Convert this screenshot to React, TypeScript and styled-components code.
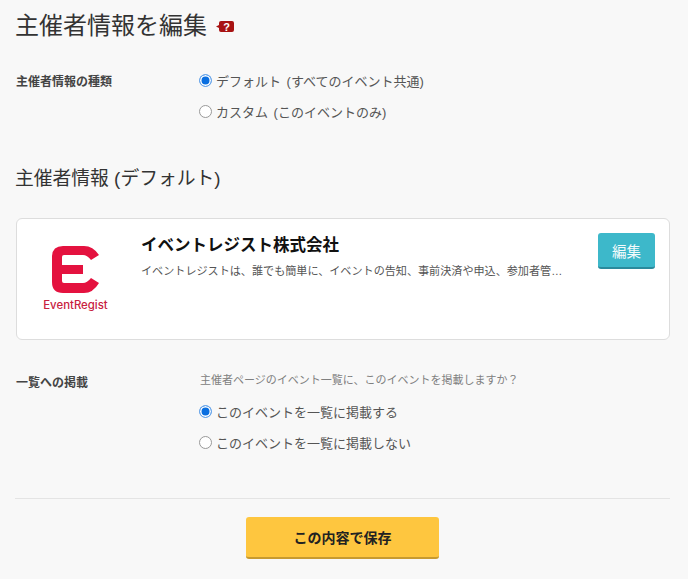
import React from 'react';
import styled, { createGlobalStyle } from 'styled-components';

const GlobalStyle = createGlobalStyle`
  html, body {
    margin: 0;
    padding: 0;
    background: #f8f8f8;
    font-family: "Liberation Sans", "Noto Sans CJK JP", sans-serif;
    color: #333;
  }
`;

const Page = styled.div`
  width: 688px;
  height: 579px;
  overflow: hidden;
  box-sizing: border-box;
  padding: 11px 18px 0 16px;
`;

const TitleRow = styled.div`
  display: flex;
  align-items: center;
  gap: 9px;
  height: 30px;
`;

const Title = styled.h1`
  margin: 0;
  font-size: 24px;
  font-weight: 400;
  line-height: 30px;
  color: #333;
  margin-left: -1px;
`;

const Section = styled.div<{ $top: number }>`
  display: flex;
  margin-top: ${(p) => p.$top}px;
`;

const Label = styled.div`
  width: 184px;
  flex: none;
  padding-top: 2px;
  font-size: 12px;
  font-weight: 700;
  line-height: 18px;
  color: #444;
`;

const Options = styled.div`
  display: flex;
  flex-direction: column;
  gap: 13px;
`;

const Hint = styled.div`
  font-size: 11px;
  line-height: 16px;
  color: #808080;
  margin-bottom: 14px;
`;

const Option = styled.label`
  display: flex;
  align-items: center;
  gap: 4px;
  height: 18px;
  font-size: 13px;
  word-spacing: 2px;
  color: #555;
`;

const Radio = styled.span<{ $on?: boolean }>`
  width: 13px;
  height: 13px;
  margin-left: -1px;
  box-sizing: border-box;
  border-radius: 50%;
  background: ${(p) => (p.$on ? '#0a6fe0' : '#fff')};
  border: 1px solid ${(p) => (p.$on ? '#6aa6ea' : '#999')};
  box-shadow: ${(p) => (p.$on ? 'inset 0 0 0 1.5px #fff' : 'none')};
`;

const SubTitle = styled.h2`
  margin: 46px 0 0 -1px;
  font-size: 18.8px;
  font-weight: 400;
  line-height: 26px;
  color: #333;
`;

const Card = styled.div`
  display: flex;
  margin-top: 26px;
  height: 122px;
  box-sizing: border-box;
  background: #fff;
  border: 1px solid #ddd;
  border-radius: 6px;
  padding: 14px 14px 0 0;
`;

const LogoBox = styled.div`
  width: 117px;
  margin-right: 7px;
  flex: none;
  display: flex;
  flex-direction: column;
  align-items: center;
  padding-top: 13px;
`;

const LogoText = styled.div`
  margin-top: 5px;
  font-family: "Inter", "Liberation Sans", sans-serif;
  font-size: 11.4px;
  font-weight: 500;
  line-height: 14px;
  color: #c8213f;
`;

const CardBody = styled.div`
  flex: 1;
  min-width: 0;
  padding-top: 1px;
`;

const OrgName = styled.div`
  font-size: 16.5px;
  font-weight: 700;
  line-height: 22px;
  color: #111;
`;

const OrgText = styled.div`
  margin-top: 7px;
  width: 421px;
  font-size: 11.1px;
  line-height: 16px;
  color: #555;
  white-space: nowrap;
`;

const EditButton = styled.button`
  flex: none;
  width: 57px;
  height: 36px;
  padding: 0;
  border: 0;
  border-bottom: 2px solid #2a8a9c;
  border-radius: 3px;
  background: #3db8ca;
  color: #f4fbfc;
  font: inherit;
  font-size: 14.5px;
`;

const Divider = styled.hr`
  margin: 47px 0 0 -1px;
  border: 0;
  border-top: 1px solid #e4e4e4;
`;

const Footer = styled.div`
  display: flex;
  justify-content: center;
  margin: 18px 0 0 -1px;
`;

const SaveButton = styled.button`
  width: 193px;
  height: 42px;
  padding: 0;
  border: 0;
  border-bottom: 2px solid #c79a30;
  border-radius: 3px;
  background: #fec63f;
  color: #222;
  font: inherit;
  font-size: 14px;
  font-weight: 700;
`;

const HelpIcon = () => (
  <svg width="18" height="13" viewBox="0 0 18 13">
    <path d="M3 3 Q3 1 5 1 H16 Q18 1 18 3 V10 Q18 12 16 12 H5 Q3 12 3 10 V8 L0 6.5 L3 5 Z" fill="#a81313" />
    <text x="10.5" y="10.5" textAnchor="middle" fontSize="11" fontWeight="700" fill="#fff" fontFamily="Liberation Sans">?</text>
  </svg>
);

const Logo = () => (
  <svg width="48" height="47" viewBox="0 0 48 47">
    <path
      d="M11 0 H32 Q41 0 47 9 L39 14 Q35 9 31 9 H12 Q10 9 10 11 V19 H31 V28 H10 V35 Q10 37 12 37 H31 Q35 37 39 32 L47 37 Q41 47 32 47 H11 Q0 47 0 36 V11 Q0 0 11 0 Z"
      fill="#e4123f"
    />
  </svg>
);

export default function App() {
  return (
    <Page>
      <GlobalStyle />
      <TitleRow>
        <Title>主催者情報を編集</Title>
        <HelpIcon />
      </TitleRow>

      <Section $top={30}>
        <Label>主催者情報の種類</Label>
        <Options>
          <Option><Radio $on />デフォルト (すべてのイベント共通)</Option>
          <Option><Radio />カスタム (このイベントのみ)</Option>
        </Options>
      </Section>

      <SubTitle>主催者情報 (デフォルト)</SubTitle>

      <Card>
        <LogoBox>
          <Logo />
          <LogoText>EventRegist</LogoText>
        </LogoBox>
        <CardBody>
          <OrgName>イベントレジスト株式会社</OrgName>
          <OrgText>イベントレジストは、誰でも簡単に、イベントの告知、事前決済や申込、参加者管…</OrgText>
        </CardBody>
        <EditButton>編集</EditButton>
      </Card>

      <Section $top={32}>
        <Label>一覧への掲載</Label>
        <div>
          <Hint>主催者ページのイベント一覧に、このイベントを掲載しますか？</Hint>
          <Options>
            <Option><Radio $on />このイベントを一覧に掲載する</Option>
            <Option><Radio />このイベントを一覧に掲載しない</Option>
          </Options>
        </div>
      </Section>

      <Divider />

      <Footer>
        <SaveButton>この内容で保存</SaveButton>
      </Footer>
    </Page>
  );
}
